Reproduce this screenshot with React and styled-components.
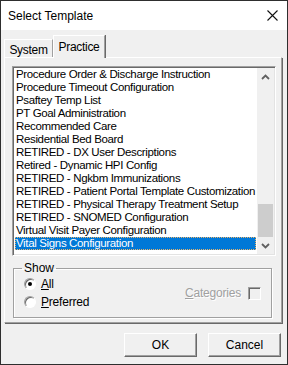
import React from "react";
import styled, { createGlobalStyle } from "styled-components";

const templates = [
    "Procedure Order & Discharge Instruction",
    "Procedure Timeout Configuration",
    "Psaftey Temp List",
    "PT Goal Administration",
    "Recommended Care",
    "Residential Bed Board",
    "RETIRED - DX User Descriptions",
    "Retired - Dynamic HPI Config",
    "RETIRED - Ngkbm Immunizations",
    "RETIRED - Patient Portal Template Customization",
    "RETIRED - Physical Therapy Treatment Setup",
    "RETIRED - SNOMED Configuration",
    "Virtual Visit Payer Configuration",
    "Vital Signs Configuration",
];

const App = () => {
    const selected = "Vital Signs Configuration";

    return (
        <>
            <GlobalStyle />
            <Window>
                <TitleBar>
                    <Title>Select Template</Title>
                    <svg width="11" height="11" viewBox="0 0 11 11">
                        <path d="M0.5 0.5 L10.5 10.5 M10.5 0.5 L0.5 10.5" stroke="#111" strokeWidth="1.1" fill="none" />
                    </svg>
                </TitleBar>
                <Body>
                    <TabStrip>
                        <Tab>System</Tab>
                        <Tab active>Practice</Tab>
                    </TabStrip>
                    <TabPanel>
                        <ListBox>
                            <Items>
                                {templates.map(name => (
                                    <Item key={name} selected={name === selected}>{name}</Item>
                                ))}
                            </Items>
                            <ScrollBar>
                                <ArrowBox>
                                    <svg width="9" height="6" viewBox="0 0 9 6">
                                        <path d="M1 5 L4.5 1.5 L8 5" stroke="#606060" strokeWidth="1.8" fill="none" />
                                    </svg>
                                </ArrowBox>
                                <Track>
                                    <Thumb />
                                </Track>
                                <ArrowBox>
                                    <svg width="9" height="6" viewBox="0 0 9 6">
                                        <path d="M1 1 L4.5 4.5 L8 1" stroke="#606060" strokeWidth="1.8" fill="none" />
                                    </svg>
                                </ArrowBox>
                            </ScrollBar>
                        </ListBox>
                        <GroupBox>
                            <Legend>Show</Legend>
                            <GroupContent>
                                <Radios>
                                    <Option>
                                        <Radio checked />
                                        <span><u>A</u>ll</span>
                                    </Option>
                                    <Option>
                                        <Radio />
                                        <span><u>P</u>referred</span>
                                    </Option>
                                </Radios>
                                <CheckOption>
                                    <span><u>C</u>ategories</span>
                                    <CheckBox />
                                </CheckOption>
                            </GroupContent>
                        </GroupBox>
                    </TabPanel>
                    <ButtonRow>
                        <Button>OK</Button>
                        <Button>Cancel</Button>
                    </ButtonRow>
                </Body>
            </Window>
        </>
    );
};

const GlobalStyle = createGlobalStyle`
    body {
        margin: 0;
        background: #f0f0f0;
        font-family: "Liberation Sans", Arial, sans-serif;
    }
`;

const Window = styled.div`
    width: 288px;
    height: 365px;
    box-sizing: border-box;
    border: 1px solid #2e2e2e;
    background: #f0f0f0;
    display: flex;
    flex-direction: column;
    color: #000;
`;

const TitleBar = styled.div`
    height: 29px;
    background: #fff;
    display: flex;
    align-items: center;
    justify-content: space-between;
    padding: 0 9px 0 7px;
`;

const Title = styled.span`
    font-size: 12px;
`;

const Body = styled.div`
    flex: 1;
    display: flex;
    flex-direction: column;
    padding: 6px 5px 0 3px;
`;

const TabStrip = styled.div`
    display: flex;
    align-items: flex-end;
    height: 22px;
    margin-bottom: -1px;
`;

const Tab = styled.div`
    box-sizing: border-box;
    font-size: 12px;
    letter-spacing: -0.3px;
    display: flex;
    align-items: center;
    justify-content: center;
    background: #f0f0f0;
    border-top: 1px solid #fff;
    border-left: 1px solid #fff;
    border-right: 1px solid #a0a0a0;
    box-shadow: 1px 0 0 #696969;
    width: ${p => (p.active ? "52px" : "49px")};
    height: ${p => (p.active ? "23px" : "18px")};
    margin-bottom: ${p => (p.active ? "0" : "1px")};
    padding-top: ${p => (p.active ? "0" : "2px")};
    position: relative;
    z-index: ${p => (p.active ? 2 : 1)};
`;

const TabPanel = styled.div`
    box-sizing: border-box;
    height: 266px;
    border-top: 1px solid #fff;
    border-left: 1px solid #fff;
    border-right: 1px solid #a0a0a0;
    border-bottom: 1px solid #a0a0a0;
    box-shadow: 1px 1px 0 #696969;
    padding: 8px 5px 0 7px;
    display: flex;
    flex-direction: column;
`;

const ListBox = styled.div`
    box-sizing: border-box;
    height: 190px;
    display: flex;
    background: #fff;
    border-top: 1px solid #a0a0a0;
    border-left: 1px solid #a0a0a0;
    border-right: 1px solid #fff;
    border-bottom: 1px solid #fff;
    box-shadow: inset 1px 1px 0 #696969, inset -1px -1px 0 #e3e3e3;
    padding: 1px;
`;

const Items = styled.div`
    flex: 1;
    padding: 0 1px;
    overflow: hidden;
`;

const Item = styled.div`
    height: 13px;
    line-height: 13px;
    font-size: 11.5px;
    letter-spacing: -0.35px;
    padding-left: 1px;
    white-space: nowrap;
    box-sizing: border-box;
    background: ${p => (p.selected ? "#0078d7" : "transparent")};
    color: ${p => (p.selected ? "#fff" : "#000")};
    outline: ${p => (p.selected ? "1px dotted #e8b36b" : "none")};
    outline-offset: -1px;
`;

const ScrollBar = styled.div`
    width: 17px;
    background: #f0f0f0;
    display: flex;
    flex-direction: column;
`;

const ArrowBox = styled.div`
    height: 17px;
    display: flex;
    align-items: center;
    justify-content: center;
`;

const Track = styled.div`
    flex: 1;
    display: flex;
    flex-direction: column;
    justify-content: flex-end;
    align-items: center;
`;

const Thumb = styled.div`
    width: 15px;
    height: 33px;
    background: #cdcdcd;
`;

const GroupBox = styled.fieldset`
    margin: 5px 4px 0 1px;
    padding: 0 10px 6px 10px;
    border: 1px solid #a0a0a0;
    box-shadow: inset 1px 1px 0 #fff, 1px 1px 0 #fff;
    font-size: 11px;
`;

const Legend = styled.legend`
    padding: 0 2px;
    margin-left: -2px;
    font-size: 12px;
`;

const GroupContent = styled.div`
    display: flex;
    align-items: center;
    justify-content: space-between;
`;

const Radios = styled.div`
    display: flex;
    flex-direction: column;
`;

const Option = styled.label`
    display: flex;
    align-items: center;
    gap: 5px;
    height: 18px;
    font-size: 12px;
    letter-spacing: -0.2px;
`;

const Radio = styled.span`
    box-sizing: border-box;
    width: 12px;
    height: 12px;
    border-radius: 50%;
    background: #fff;
    border-top: 1px solid #a0a0a0;
    border-left: 1px solid #a0a0a0;
    border-right: 1px solid #fff;
    border-bottom: 1px solid #fff;
    box-shadow: inset 1px 1px 0 #696969;
    display: flex;
    align-items: center;
    justify-content: center;
    &::after {
        content: "";
        width: 4px;
        height: 4px;
        border-radius: 50%;
        background: ${p => (p.checked ? "#000" : "transparent")};
    }
`;

const CheckOption = styled.div`
    display: flex;
    align-items: center;
    gap: 7px;
    color: #a0a0a0;
    font-size: 12px;
    letter-spacing: -0.2px;
    text-shadow: 1px 1px 0 #fff;
`;

const CheckBox = styled.span`
    box-sizing: border-box;
    width: 13px;
    height: 13px;
    background: #f0f0f0;
    border-top: 1px solid #a0a0a0;
    border-left: 1px solid #a0a0a0;
    border-right: 1px solid #fff;
    border-bottom: 1px solid #fff;
    box-shadow: inset 1px 1px 0 #696969;
`;

const ButtonRow = styled.div`
    display: flex;
    justify-content: flex-end;
    gap: 11px;
    margin-top: 10px;
    padding-right: 1px;
`;

const Button = styled.button`
    box-sizing: border-box;
    width: 73px;
    height: 24px;
    font-family: "Liberation Sans", Arial, sans-serif;
    font-size: 12px;
    background: #f0f0f0;
    color: #000;
    border-top: 1px solid #fff;
    border-left: 1px solid #fff;
    border-right: 1px solid #696969;
    border-bottom: 1px solid #696969;
    box-shadow: inset -1px -1px 0 #a0a0a0;
    padding: 0;
`;

export default App;
